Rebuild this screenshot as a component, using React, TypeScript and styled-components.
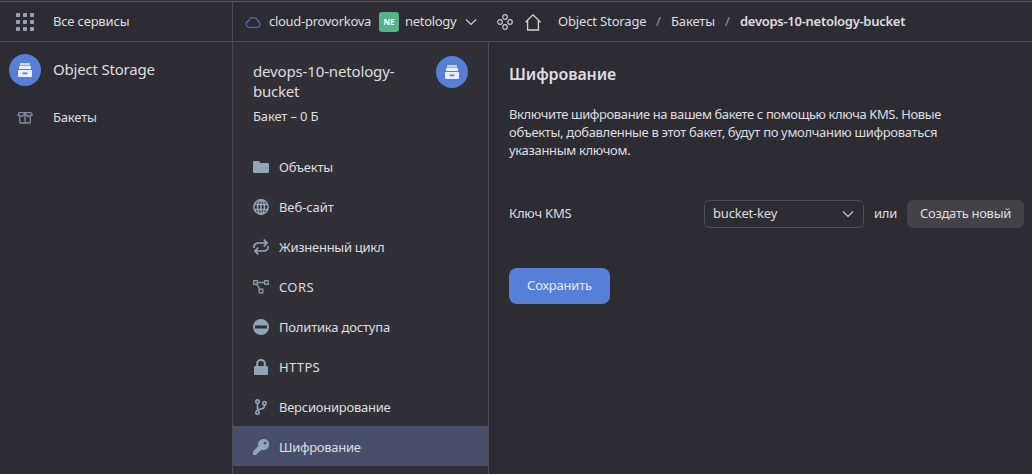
import React from "react";
import styled, { createGlobalStyle, css } from "styled-components";

const GlobalStyle = createGlobalStyle`
  * { box-sizing: border-box; }
  body {
    margin: 0;
    background: #2d2c33;
    color: #dedee0;
    font-family: "Noto Sans", "Open Sans", sans-serif;
    font-size: 13px;
    line-height: 18px;
    overflow: hidden;
  }
  svg { display: block; flex: none; }
`;

const Page = styled.div`
  height: 474px;
  padding-top: 1px;
  display: flex;
  flex-direction: column;
`;

const Label = styled.span<{ $track?: number; $width?: number }>`
  white-space: nowrap;
  letter-spacing: ${(p) => p.$track ?? 0}px;
  ${(p) => p.$width && css`width: ${p.$width}px; flex: none;`}
`;

const Slash = styled.span`
  width: 25px;
  flex: none;
  padding-left: 10px;
  color: #96969a;
`;

const Header = styled.header`
  height: 41px;
  flex: none;
  display: flex;
  border-top: 1px solid #5d5c61;
  border-bottom: 1px solid #4d4c52;

  ${Label}, ${Slash} {
    padding-bottom: 2px;
  }
`;

const Services = styled.div`
  width: 233px;
  padding: 1px 0 0 16px;
  display: flex;
  align-items: center;
  gap: 19px;
  border-right: 1px solid #4d4c52;
`;

const Context = styled.div`
  width: 264px;
  padding: 1px 0 0 12px;
  display: flex;
  align-items: center;
`;

const CloudName = styled(Label)`
  margin-left: 8px;
`;

const Badge = styled.span`
  width: 20px;
  height: 20px;
  margin: 0 6px 0 8px;
  flex: none;
  border-radius: 3px;
  background: #53b389;
  color: #fff;
  font-size: 8px;
  font-weight: 700;
  line-height: 20px;
  text-align: center;
`;

const Crumbs = styled.nav`
  padding-top: 1px;
  display: flex;
  align-items: center;
`;

const HomeLink = styled.span`
  margin: 0 17px 0 12px;
`;

const Current = styled(Label)`
  font-weight: 600;
`;

const Body = styled.div`
  flex: 1;
  display: flex;
  min-height: 0;
`;

const Sidebar = styled.aside`
  width: 233px;
  flex: none;
  padding: 12px 0 0 9px;
  border-right: 1px solid #4d4c52;

  ${Label} {
    padding-bottom: 2px;
  }
`;

const ProductRow = styled.div`
  height: 32px;
  display: flex;
  align-items: center;
  gap: 12px;
  font-size: 15px;
`;

const SideItem = styled.div`
  height: 32px;
  margin-top: 16px;
  padding-left: 8px;
  display: flex;
  align-items: center;
  gap: 20px;
`;

const Circle = styled.span`
  width: 32px;
  height: 32px;
  flex: none;
  border-radius: 50%;
  background: #567fd8;
  display: flex;
  align-items: center;
  justify-content: center;
`;

const Panel = styled.section`
  width: 256px;
  flex: none;
  background: #313036;
  border-right: 1px solid #4d4c52;
`;

const PanelHead = styled.div`
  height: 104px;
  padding: 14px 20px 0;
  display: flex;
  justify-content: space-between;
`;

const BucketName = styled.div`
  padding-top: 5px;
  font-size: 15px;
  line-height: 20px;
`;

const BucketSize = styled.div`
  margin-top: 6px;
`;

const MenuItem = styled.div<{ $active?: boolean }>`
  height: 40px;
  padding: 2px 0 0 20px;
  display: flex;
  align-items: center;
  gap: 10px;
  background: ${(p) => (p.$active ? "#484f6b" : "transparent")};
`;

const Main = styled.main`
  flex: 1;
  padding: 20px 8px 0 20px;
`;

const Title = styled.h1`
  margin: 0;
  font-size: 16px;
  line-height: 24px;
  font-weight: 600;
`;

const Description = styled.p`
  margin: 19px 0 0;
  display: flex;
  flex-direction: column;
`;

const Field = styled.div`
  height: 28px;
  margin-top: 41px;
  display: flex;
  align-items: center;

  > ${Label} {
    padding-bottom: 2px;
  }
`;

const Select = styled.div`
  width: 160px;
  height: 28px;
  padding: 0 9px 0 8px;
  display: flex;
  align-items: center;
  justify-content: space-between;
  border: 1px solid #4f4e54;
  border-radius: 6px;

  ${Label} {
    padding-bottom: 2px;
  }
`;

const Or = styled(Label)`
  margin-left: 10px;
`;

const Button = styled.button<{ $primary?: boolean }>`
  border: 0;
  padding: 0 0 2px;
  font: inherit;
  color: #dedee0;
  background: #434247;
  width: 117px;
  height: 28px;
  border-radius: 6px;
  ${(p) =>
    p.$primary &&
    css`
      display: block;
      margin-top: 40px;
      width: 101px;
      height: 36px;
      border-radius: 8px;
      background: #567fd8;
      color: #e4eaf8;
    `}
`;

const steel = "#92a5b8";

const GridIcon = () => (
  <svg width="18" height="18" fill={steel}>
    {[0, 7, 14].map((y) =>
      [0, 7, 14].map((x) => <rect key={`${x}-${y}`} x={x} y={y} width="4" height="4" rx="0.8" />)
    )}
  </svg>
);

const StorageIcon = () => (
  <Circle>
    <svg width="14" height="14" fill="#e9eefa">
      <rect x="2" y="0" width="10" height="2.4" rx="0.5" fill="#cad7f4" />
      <rect x="1" y="3" width="12" height="3" rx="0.5" />
      <path fillRule="evenodd" d="M.8 7h12.4a.8.8 0 0 1 .8.8V13a1 1 0 0 1-1 1H1a1 1 0 0 1-1-1V7.800a.8.8 0 0 1 .8-.8ZM4.500 9.500v1q0 .8.8.8h3.400q.8 0 .8-.8v-1Z" />
    </svg>
  </Circle>
);

const BucketIcon = () => (
  <svg width="16" height="14" fill="none" stroke="#7e8e9e" strokeWidth="1.300">
    <path d="M2.700 5.500v5.700q0 .8.8.8h9q.8 0 .8-.8V5.500M8 3v9M2.200 1.700h11.600L15.200 4l-4.400 1.400L8 2.500 5.200 5.400.8 4ZM5.200 5.200 8 2.800l2.800 2.400" />
  </svg>
);

const CloudIcon = () => (
  <svg width="16" height="14" fill="none" stroke="#4a68ae" strokeWidth="1.300">
    <path d="M4 12.300h8.200a3.100 3.100 0 0 0 .6-6.100A4.700 4.700 0 0 0 3.700 6 3.200 3.200 0 0 0 4 12.300Z" />
  </svg>
);

const Chevron = () => (
  <svg width="12" height="8" fill="none" stroke="#d4d4d6" strokeWidth="1.100">
    <path d="m1 1.500 5 5 5-5" />
  </svg>
);

const ClusterIcon = () => (
  <svg width="16" height="16" fill="none" stroke="#c8c8cb" strokeWidth="1.200">
    <circle cx="8" cy="3" r="2.300" />
    <circle cx="8" cy="13" r="2.300" />
    <circle cx="3" cy="8" r="2.300" />
    <circle cx="13" cy="8" r="2.300" />
  </svg>
);

const HomeIcon = () => (
  <svg width="16" height="17" fill="none" stroke="#d4d4d6" strokeWidth="1.300">
    <path d="M.5 8.300 8 .9l7.500 7.400M2.600 7v9h10.800V7" />
  </svg>
);

const FolderIcon = () => (
  <svg width="16" height="16" fill={steel}>
    <path d="M1.200 2h4.300q.5 0 .8.4L7.500 4h7.300q1.200 0 1.200 1.200v7.600q0 1.200-1.200 1.200H1.200Q0 14 0 12.800V3.200Q0 2 1.200 2Z" />
  </svg>
);

const GlobeIcon = () => (
  <svg width="16" height="16" fill="none" stroke={steel} strokeWidth="1.500">
    <circle cx="8" cy="8" r="7.200" />
    <ellipse cx="8" cy="8" rx="3.500" ry="7.200" />
    <path d="M8 1v14M1.500 5.400h13M1.500 10.600h13" />
  </svg>
);

const CycleIcon = () => (
  <svg width="16" height="16" fill="none" stroke={steel} strokeWidth="1.700">
    <path d="M1 9V8a4 4 0 0 1 4-4h8M10.800.6 14 4l-3.200 3.400M15 7v1a4 4 0 0 1-4 4H3M5.200 8.600 2 12l3.200 3.400" />
  </svg>
);

const CorsIcon = () => (
  <svg width="16" height="16" fill="none" stroke="#8294a6" strokeWidth="1.400">
    <path d="M.7 1.700h3.600v3.600H.7ZM11.700 1.700h3.600v3.600h-3.600ZM6.200 10.200h3.600v3.600H6.200ZM4.300 3.500h7.400M3.700 5.300l3.400 4.900" />
  </svg>
);

const PolicyIcon = () => (
  <svg width="16" height="16" fill={steel}>
    <path fillRule="evenodd" d="M8 0a8 8 0 1 1 0 16A8 8 0 0 1 8 0ZM2.500 6.500q-.5 0-.5.5v2q0 .5.5.5h11q.5 0 .5-.5V7q0-.5-.5-.5Z" />
  </svg>
);

const LockIcon = () => (
  <svg width="16" height="16" fill={steel}>
    <rect x="1" y="7" width="14" height="9" rx="1.300" />
    <path d="M4.200 8V4.700a3.800 3.800 0 0 1 7.600 0V8" fill="none" stroke={steel} strokeWidth="2" />
  </svg>
);

const BranchIcon = () => (
  <svg width="16" height="16" fill="none" stroke={steel} strokeWidth="1.600">
    <circle cx="4.500" cy="2.600" r="1.700" />
    <circle cx="4.500" cy="13.400" r="1.700" />
    <circle cx="11.500" cy="4.200" r="1.700" />
    <path d="M4.500 4.400v7.200M11.500 6v.8q0 2.400-2.400 2.900L4.800 10.600" />
  </svg>
);

const KeyIcon = () => (
  <svg width="16" height="16" fill={steel}>
    <path fillRule="evenodd" d="M10.500 0a5.500 5.500 0 1 1-1.600 10.700L7.600 12H6v2H4v1.300q0 .7-.7.7H.7q-.7 0-.7-.7v-2.400q0-.4.300-.7l5-5.100A5.500 5.500 0 0 1 10.500 0ZM12 2.500a1.500 1.500 0 1 0 0 3 1.500 1.500 0 0 0 0-3Z" />
  </svg>
);

const menu = [
  { text: "Объекты", icon: FolderIcon, track: -0.25 },
  { text: "Веб-сайт", icon: GlobeIcon, track: -0.08 },
  { text: "Жизненный цикл", icon: CycleIcon, track: -0.28 },
  { text: "CORS", icon: CorsIcon, track: 0.4 },
  { text: "Политика доступа", icon: PolicyIcon, track: -0.2 },
  { text: "HTTPS", icon: LockIcon, track: 0.35 },
  { text: "Версионирование", icon: BranchIcon, track: -0.25 },
  { text: "Шифрование", icon: KeyIcon, track: -0.3, active: true },
];

export default function App() {
  return (
    <Page>
      <GlobalStyle />
      <Header>
        <Services>
          <GridIcon />
          <Label $track={-0.18}>Все сервисы</Label>
        </Services>
        <Context>
          <CloudIcon />
          <CloudName $width={102} $track={-0.29}>cloud-provorkova</CloudName>
          <Badge>NE</Badge>
          <Label $width={60} $track={-0.3}>netology</Label>
          <Chevron />
        </Context>
        <Crumbs>
          <ClusterIcon />
          <HomeLink><HomeIcon /></HomeLink>
          <Label $width={88} $track={-0.15}>Object Storage</Label>
          <Slash>/</Slash>
          <Label $width={44} $track={-0.15}>Бакеты</Label>
          <Slash>/</Slash>
          <Current $track={-0.28}>devops-10-netology-bucket</Current>
        </Crumbs>
      </Header>
      <Body>
        <Sidebar>
          <ProductRow>
            <StorageIcon />
            <Label $track={-0.2}>Object Storage</Label>
          </ProductRow>
          <SideItem>
            <BucketIcon />
            <Label $track={-0.18}>Бакеты</Label>
          </SideItem>
        </Sidebar>
        <Panel>
          <PanelHead>
            <div>
              <BucketName>
                <Label $track={-0.15}>devops-10-netology-</Label>
                <br />
                <Label $track={-0.25}>bucket</Label>
              </BucketName>
              <BucketSize><Label $track={-0.15}>Бакет – 0 Б</Label></BucketSize>
            </div>
            <StorageIcon />
          </PanelHead>
          {menu.map(({ text, icon: Icon, track, active }) => (
            <MenuItem key={text} $active={active}>
              <Icon />
              <Label $track={track}>{text}</Label>
            </MenuItem>
          ))}
        </Panel>
        <Main>
          <Title><Label $track={-0.1}>Шифрование</Label></Title>
          <Description>
            <Label $track={-0.39}>Включите шифрование на вашем бакете с помощью ключа KMS. Новые</Label>
            <Label $track={-0.33}>объекты, добавленные в этот бакет, будут по умолчанию шифроваться</Label>
            <Label $track={-0.33}>указанным ключом.</Label>
          </Description>
          <Field>
            <Label $width={195} $track={-0.2}>Ключ KMS</Label>
            <Select>
              <Label $track={-0.2}>bucket-key</Label>
              <Chevron />
            </Select>
            <Or $width={33} $track={-0.25}>или</Or>
            <Button><Label $track={-0.3}>Создать новый</Label></Button>
          </Field>
          <Button $primary><Label $track={-0.2}>Сохранить</Label></Button>
        </Main>
      </Body>
    </Page>
  );
}
